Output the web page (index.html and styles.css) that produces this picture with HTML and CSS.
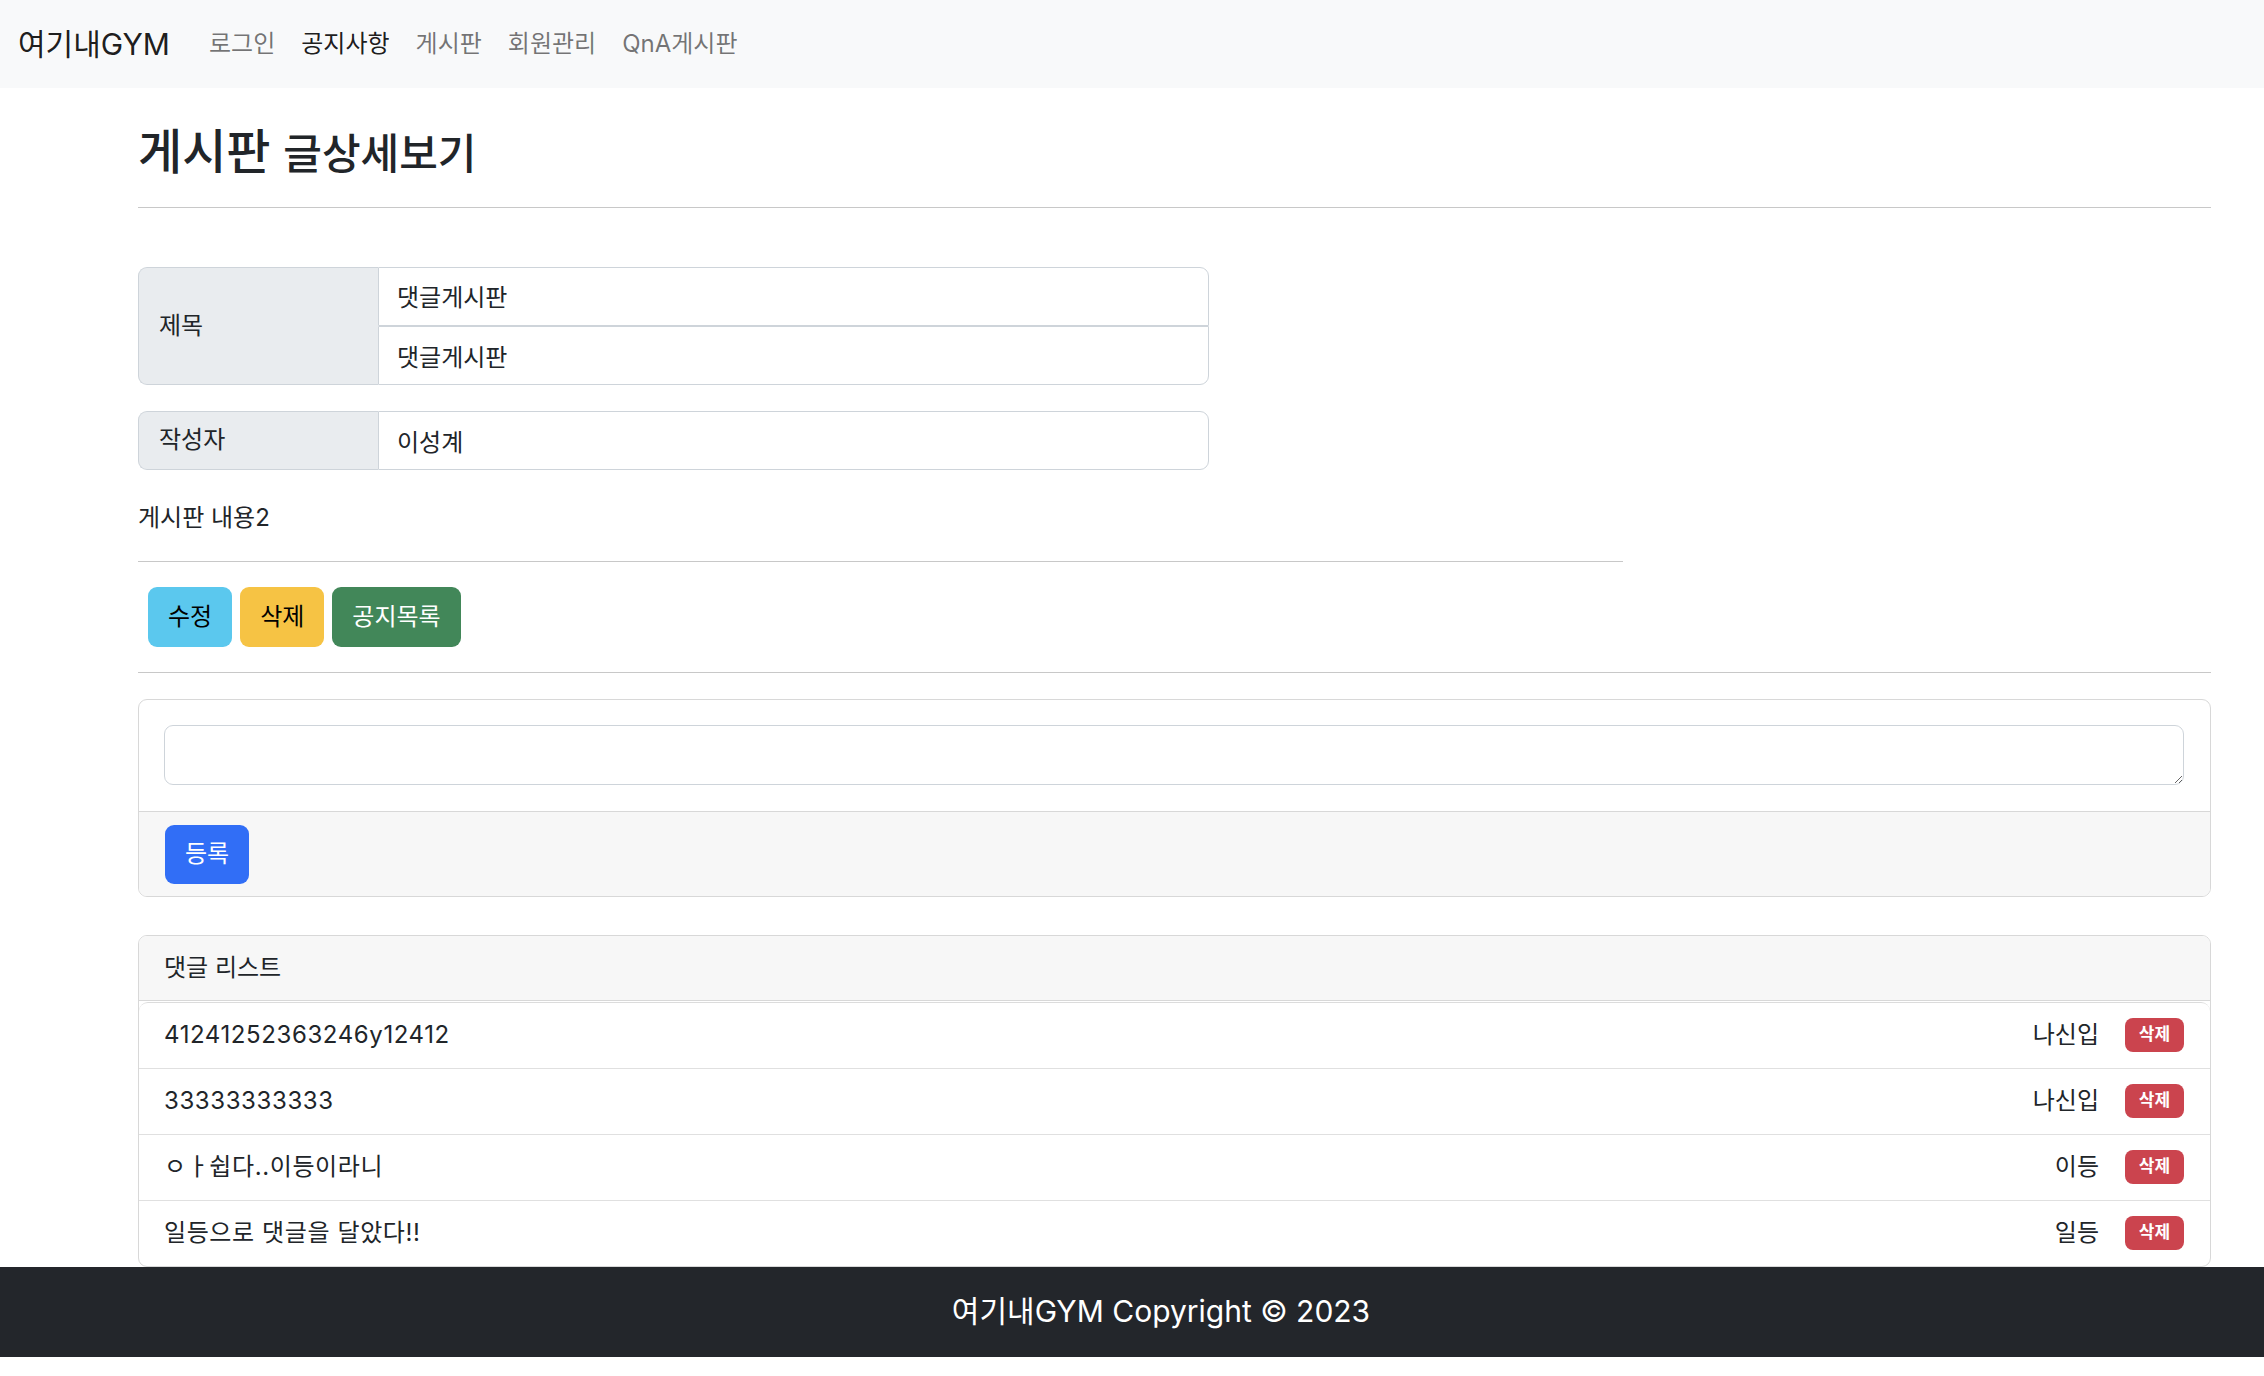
FILE: index.html
```html
<!DOCTYPE html>
<html lang="ko">
<head>
  <meta charset="UTF-8" />
  <meta name="viewport" content="width=device-width, initial-scale=1.0"/>
  <title>여기내GYM — 게시판 글상세보기</title>
  <link rel="stylesheet" href="styles.css">
</head>
<body>
  <nav class="navbar">
    <a class="brand" href="#">여기내GYM</a>
    <a class="nav-link" href="#">로그인</a>
    <a class="nav-link active" href="#">공지사항</a>
    <a class="nav-link" href="#">게시판</a>
    <a class="nav-link" href="#">회원관리</a>
    <a class="nav-link" href="#">QnA게시판</a>
  </nav>

  <main class="container">
    <h2 class="page-title">게시판 <small>글상세보기</small></h2>
    <hr class="rule">

    <div class="input-group tall">
      <div class="group-label">제목</div>
      <div class="group-stack">
        <input class="form-control first" type="text" value="댓글게시판" readonly>
        <input class="form-control last" type="text" value="댓글게시판" readonly>
      </div>
    </div>

    <div class="input-group">
      <div class="group-label">작성자</div>
      <div class="group-stack">
        <input class="form-control single" type="text" value="이성계" readonly>
      </div>
    </div>

    <p class="post-body">게시판 내용2</p>
    <hr class="rule short">

    <div class="actions">
      <button class="btn btn-info">수정</button>
      <button class="btn btn-warning">삭제</button>
      <button class="btn btn-success">공지목록</button>
    </div>
    <hr class="rule">

    <div class="card reply-form">
      <div class="card-body">
        <textarea class="form-control reply-input"></textarea>
      </div>
      <div class="card-footer">
        <button class="btn btn-primary">등록</button>
      </div>
    </div>

    <div class="card reply-list">
      <div class="card-header">댓글 리스트</div>
      <ul class="list-group">
        <li class="list-item"><span class="reply">41241252363246y12412</span><span class="meta">나신입 <span class="badge">삭제</span></span></li>
        <li class="list-item"><span class="reply">33333333333</span><span class="meta">나신입 <span class="badge">삭제</span></span></li>
        <li class="list-item"><span class="reply">ㅇㅏ쉽다..이등이라니</span><span class="meta">이등 <span class="badge">삭제</span></span></li>
        <li class="list-item"><span class="reply">일등으로 댓글을 달았다!!</span><span class="meta">일등 <span class="badge">삭제</span></span></li>
      </ul>
    </div>
  </main>

  <footer class="footer">여기내GYM Copyright © 2023</footer>
</body>
</html>
```

FILE: styles.css
```css
body { margin: 0; font-family: "Inter", "Noto Sans CJK KR", sans-serif; font-size: 24px; line-height: 1.5; color: #212529; background: #fff; }
a { text-decoration: none; }

.navbar { display: flex; align-items: center; height: 88px; padding: 0 18px; background: #f8f9fa; }
.brand { font-size: 30px; color: rgba(0,0,0,0.9); margin-right: 26px; }
.nav-link { padding: 0 13px; color: rgba(0,0,0,0.55); }
.nav-link.active { color: rgba(0,0,0,0.9); }

.container { padding: 0 53px 0 138px; }
.page-title { margin: 35px 0 0; font-size: 48px; font-weight: 500; line-height: 1.2; }
.page-title small { font-size: 42px; }

.rule { border: 0; border-top: 1px solid #c8c8c8; margin: 0; }
.page-title + .rule { margin-top: 26px; }
.rule.short { width: 1485px; margin-top: 25px; }
.actions + .rule { margin-top: 25px; }

.input-group { display: flex; width: 1071px; margin-top: 26px; }
.input-group.tall { margin-top: 59px; }
.group-label { width: 240px; box-sizing: border-box; display: flex; align-items: center; padding: 0 20px; background: #e9ecef; border: 1px solid #ced4da; border-right: 0; border-radius: 9px 0 0 9px; }
.group-stack { flex: 1; display: flex; flex-direction: column; }
.form-control { font: inherit; color: #212529; box-sizing: border-box; height: 59px; padding: 0 18px; border: 1px solid #ced4da; background: #fff; outline: none; }
.form-control.first { border-radius: 0 9px 0 0; padding-bottom: 2px; }
.form-control.last { border-radius: 0 0 9px 0; }
.form-control.single { border-radius: 0 9px 9px 0; }

.post-body { margin: 30px 0 0; line-height: 36px; }

.actions { display: flex; gap: 8px; margin: 25px 0 0 10px; }
.btn { font: inherit; height: 60px; padding: 0 19px; border: 1px solid transparent; border-radius: 9px; cursor: pointer; }
.btn-info { background: #5bc8ee; color: #000; }
.btn-warning { background: #f6c344; color: #000; }
.btn-success { background: #428759; color: #fff; }
.btn-primary { background: #316ef6; color: #fff; height: 59px; }

.card { border: 1px solid #d8d8d8; border-radius: 9px; overflow: hidden; }
.reply-form { margin-top: 26px; }
.card-body { padding: 25px 26px 26px 25px; }
.reply-input { display: block; width: 100%; height: 60px; border-radius: 9px; resize: vertical; }
.card-footer { padding: 13px 26px 12px; background: #f7f7f7; border-top: 1px solid #d8d8d8; }

.reply-list { margin-top: 38px; }
.card-header { height: 64px; display: flex; align-items: center; padding: 0 25px; background: #f7f7f7; border-bottom: 1px solid #d8d8d8; }
.list-group { list-style: none; margin: 1px 0 0; padding: 0; border-top: 1px solid #dcdcdc; border-radius: 9px 9px 0 0; }
.list-item { display: flex; justify-content: space-between; align-items: center; height: 65px; padding: 0 26px 0 25px; border-bottom: 1px solid #e0e0e0; }
.list-item:last-child { border-bottom: 0; }
.reply { letter-spacing: 0.6px; }
.meta { display: flex; align-items: center; gap: 26px; }
.badge { display: inline-flex; align-items: center; justify-content: center; width: 59px; height: 34px; border-radius: 8px; background: #cb444e; color: #fff; font-size: 17px; font-weight: 700; }

.footer { height: 90px; display: flex; align-items: center; justify-content: center; padding-left: 58px; background: #23262b; color: #fff; font-size: 30px; }
```
